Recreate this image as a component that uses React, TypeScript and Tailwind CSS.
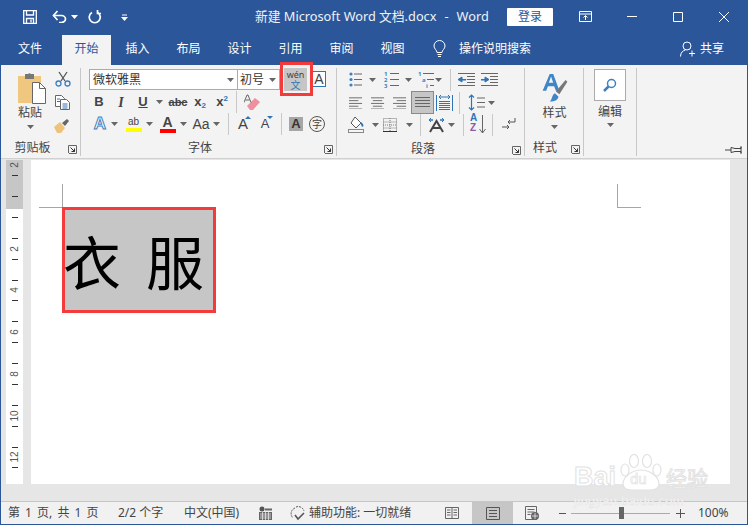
import type { ReactNode } from "react";

const Caret = ({ className = "" }: { className?: string }) => (
  <svg className={"shrink-0 " + className} width="7" height="4" viewBox="0 0 7 4">
    <path d="M0 0h7L3.5 4z" fill="#666" />
  </svg>
);

const Sep = ({ className = "" }: { className?: string }) => <div className={"w-px h-[22px] bg-[#c8c8c8] shrink-0 " + className} />;

const Launcher = ({ className = "" }: { className?: string }) => (
  <svg className={"absolute top-[4px] " + className} width="9" height="9" viewBox="0 0 9 9" fill="none" stroke="#666">
    <path d="M.5 8V.5H8.5V8.5H1" />
    <path d="M2.5 2.5l4 4M6.5 3.5v3h-3" stroke="#333" />
  </svg>
);

const Cell = ({ className, children }: { className: string; children: ReactNode }) => (
  <div className={"flex items-center justify-center shrink-0 h-full " + className}>{children}</div>
);

const Lines = ({ rows }: { rows: [number, number][] }) => (
  <svg width="15" height="13" viewBox="0 0 15 13" stroke="#666">
    {rows.map(([a, b], i) => (
      <path key={i} d={`M${a} ${1.5 + i * 3}H${b}`} />
    ))}
  </svg>
);

const Bullets = () => (
  <svg width="13" height="15" viewBox="0 0 13 15">
    <g fill="#3f7fbf">
      <circle cx="2" cy="2" r="1.6" />
      <circle cx="2" cy="7.5" r="1.6" />
      <circle cx="2" cy="13" r="1.6" />
    </g>
    <path d="M5 2h8M5 7.5h8M5 13h8" stroke="#666" />
  </svg>
);

const Numbered = () => (
  <div className="relative w-[15px] h-[17px]">
    <div className="flex flex-col text-[6px] leading-[6px] font-bold text-[#3f7fbf]">
      <span>1</span>
      <span>2</span>
      <span>3</span>
    </div>
    <svg className="absolute left-[6px] top-0" width="9" height="17" viewBox="0 0 9 17">
      <path d="M0 2.5h9M0 8.5h9M0 14.5h9" stroke="#666" />
    </svg>
  </div>
);

const Multi = () => (
  <div className="relative w-[15px] h-[17px]">
    <span className="absolute left-0 top-0 text-[6px] leading-[6px] font-bold text-[#3f7fbf]">1</span>
    <span className="absolute left-[4px] top-[6px] text-[6px] leading-[6px] font-bold text-[#3f7fbf]">a</span>
    <span className="absolute left-[8px] top-[12px] text-[6px] leading-[6px] font-bold text-[#3f7fbf]">i</span>
    <svg className="absolute left-0 top-0" width="17" height="17" viewBox="0 0 17 17">
      <path d="M5 2.5h11M9 8.5h7M12 14.5h4" stroke="#666" />
    </svg>
  </div>
);

const Indent = ({ flip }: { flip?: boolean }) => (
  <svg width="17" height="13" viewBox="0 0 17 13">
    <path d="M0 .5h17M9 3.5h8M9 6.5h8M9 9.5h8M0 12.5h17" stroke="#666" />
    {flip ? <path d="M0 6.5h4V4l4 2.5L4 9V7H0z" fill="#2e75b6" stroke="#2e75b6" /> : <path d="M8 6.5H4V4L0 6.5 4 9V7h4z" fill="#2e75b6" stroke="#2e75b6" />}
  </svg>
);

const Paste = () => (
  <svg width="30" height="33" viewBox="0 0 30 33">
    <path d="M1 5h23v27H1z" fill="#efc77f" />
    <path d="M8 3h3a2 2 0 0 1 3 0h3v5H8z" fill="#777" />
    <path d="M15.500 11.500h7l6 6v15h-13z" fill="#fff" stroke="#666" />
    <path d="M22.500 11.500v6h6" fill="none" stroke="#666" />
  </svg>
);

const Scissors = () => (
  <svg width="16" height="16" viewBox="0 0 16 16" fill="none">
    <path d="M4 1l6 9M12 1L6 10" stroke="#555" strokeWidth="1.300" />
    <circle cx="3.500" cy="12.500" r="2.500" stroke="#3f7fbf" strokeWidth="1.300" />
    <circle cx="12.500" cy="12.500" r="2.500" stroke="#3f7fbf" strokeWidth="1.300" />
  </svg>
);

const CopyIcon = () => (
  <svg width="16" height="15" viewBox="0 0 16 15" fill="#fff" stroke="#666">
    <path d="M.5.500h6l3 3v8h-9z" />
    <path d="M5.500 4.500h6l3 3v7h-9z" />
    <path d="M2 4h3M2 6.500h3M7.500 9h5M7.500 11h5M7.500 13h5" stroke="#2e75b6" />
  </svg>
);

const Painter = () => (
  <svg width="17" height="15" viewBox="0 0 17 15">
    <path d="M0 9l6-5 5 6-4 5H3z" fill="#efc27a" />
    <path d="M8 5l5-4 2 2-4 5z" fill="#666" />
  </svg>
);

const Eraser = () => (
  <svg width="17" height="17" viewBox="0 0 17 17">
    <path d="M3 12l8-8 5 4-7 8H6z" fill="#ef8fa0" />
    <path d="M0 8.500L3 1h1l3 7.500M1.500 6h4" fill="none" stroke="#666" />
  </svg>
);

const Shading = () => (
  <svg width="17" height="17" viewBox="0 0 17 17">
    <path d="M7 1l6 6-5 5-5-5z" fill="#fff" stroke="#555" />
    <path d="M12 6c1.500 0 3 1 3.500 4l-1.500 1z" fill="#2e75b6" />
    <rect x=".5" y="13.500" width="15" height="3" fill="#f5f5f5" stroke="#888" />
  </svg>
);

const Borders = () => (
  <svg width="14" height="14" viewBox="0 0 14 14" fill="none" stroke="#777" strokeDasharray="1 1">
    <path d="M.5.500h13v13H.500zM7 0v14M0 7h14M.5 4h13M.5 10h13" />
    <path d="M0 13.500h14" stroke="#333" strokeDasharray="none" />
  </svg>
);

const Asian = () => (
  <svg width="17" height="16" viewBox="0 0 17 16">
    <path d="M1 3h4M16 3h-4" stroke="#2e75b6" strokeWidth="1.500" />
    <path d="M3 1L1 3l2 2M14 1l2 2-2 2" fill="none" stroke="#2e75b6" />
    <path d="M2 15L8.500 4 15 15M5 11h7" fill="none" stroke="#444" strokeWidth="2" />
  </svg>
);

const Sort = () => (
  <div className="relative w-[15px] h-[21px]">
    <span className="absolute left-0 top-[-1px] text-[10px] leading-[10px] font-['Liberation_Sans'] font-bold text-[#2e75b6]">A</span>
    <span className="absolute left-0 top-[9px] text-[10px] leading-[10px] font-['Liberation_Sans'] font-bold text-[#8a5aa8]">Z</span>
    <svg className="absolute left-[9px] top-0" width="7" height="20" viewBox="0 0 7 20" fill="none" stroke="#666">
      <path d="M3.500 1v18M.5 15l3 4 3-4" />
    </svg>
  </div>
);

const Marks = () => (
  <svg width="15" height="15" viewBox="0 0 15 15" fill="none" stroke="#555">
    <path d="M14 1v4H7M9 3L7 5l2 2" />
    <path d="M1 10h7M6 8l2 2-2 2" />
  </svg>
);

const Distributed = () => (
  <svg width="17" height="16" viewBox="0 0 17 16">
    <path d="M.5 0v16M16.500 0v16M3 2h11M5 0L3 2l2 2M12 0l2 2-2 2" fill="none" stroke="#2e75b6" />
    <path d="M3 6.500h11M3 8.500h11M3 10.500h11M3 12.500h11M3 14.500h11" stroke="#666" />
  </svg>
);

const Spacing = () => (
  <svg width="17" height="17" viewBox="0 0 17 17">
    <path d="M3.500 1v15M1 3.500L3.500 1 6 3.500M1 13.500L3.500 16 6 13.500" fill="none" stroke="#2e75b6" strokeWidth="1.200" />
    <path d="M9 4h8M9 8.500h8M9 13h8" stroke="#666" />
  </svg>
);

const Styles = () => (
  <svg width="30" height="30" viewBox="0 0 30 34">
    <path d="M1 20L9 1h4l7 19h-4l-2-5H7l-2 5zM8 11h5l-2.500-7z" fill="#3f86c8" />
    <path d="M29 10l-9 14-4-3 11-13z" fill="#777" />
    <path d="M15 23l4 4c-1 4-5 6-10 5 3-1 2-7 6-9z" fill="#3f86c8" />
  </svg>
);

const SaveIcon = () => (
  <svg width="14" height="14" viewBox="0 0 14 14" fill="none" stroke="#fff" strokeWidth="1.300">
    <path d="M.7.700h12.600v12.600H.7z" />
    <path d="M3.500 1v4h7V1M3.500 13V8.500h7V13" />
    <path d="M8 9.500v3" />
  </svg>
);

const UndoIcon = () => (
  <svg width="16" height="13" viewBox="0 0 16 13" fill="none" stroke="#fff" strokeWidth="1.700">
    <path d="M1.500 5.500h8a4 3.500 0 0 1 0 7H7" />
    <path d="M5.500 1L1.500 5.500 5.500 10" />
  </svg>
);

const RedoIcon = () => (
  <svg width="14" height="14" viewBox="0 0 14 14" fill="none" stroke="#fff" strokeWidth="1.700">
    <path d="M4 2.500a5.500 5.500 0 1 0 5.500 0" />
    <path d="M9.500 0v3.500H13" />
  </svg>
);

const BulbIcon = () => (
  <svg width="13" height="18" viewBox="0 0 13 18" fill="none" stroke="#fff">
    <path d="M4 12.500C4 10 1 9 1 6a5.500 5.500 0 0 1 11 0c0 3-3 4-3 6.500z" />
    <path d="M4.500 14.500h4M5 16.500h3" />
  </svg>
);

const UserIcon = () => (
  <svg width="16" height="16" viewBox="0 0 16 16" fill="none" stroke="#fff">
    <circle cx="7" cy="5" r="4" />
    <path d="M.5 15.500c0-4 2.500-6 5-6.500M12 9.500v6M9 12.500h6" />
  </svg>
);

const Book = () => (
  <svg width="14" height="14" viewBox="0 0 14 14" fill="none" stroke="#666">
    <path d="M.5 1.500h13v11H.500zM7 1.500v11M2 4h3.500M2 6.500h3.500M2 9h3.500M8.500 4H12M8.500 6.500H12M8.500 9H12" />
  </svg>
);

const PageView = () => (
  <svg width="14" height="13" viewBox="0 0 14 13" fill="none" stroke="#555">
    <path d="M.5.500h13v12H.500zM3 3.500h8M3 6.500h8M3 9.500h8" />
  </svg>
);

const WebView = () => (
  <svg width="14" height="14" viewBox="0 0 14 14">
    <path d="M.5.500h11v13H.500zM2.500 3.500h7M2.500 6h7M2.500 8.500h3" fill="none" stroke="#666" />
    <circle cx="10" cy="10" r="4" fill="#666" />
    <path d="M7 10h6M10 7v6" stroke="#fff" strokeWidth=".7" />
  </svg>
);

const MacroIcon = () => (
  <svg width="13" height="14" viewBox="0 0 13 14">
    <circle cx="3" cy="3" r="2.500" fill="#555" />
    <path d="M6 2.500h7v2H6zM0 6h13v8H0z" fill="#666" />
    <path d="M1 8h11M1 10h11M1 12h11M3.500 6v8M6.500 6v8M9.500 6v8" stroke="#f1f1f1" strokeWidth=".7" />
  </svg>
);

const AccessIcon = () => (
  <svg width="16" height="15" viewBox="0 0 16 15" fill="none" stroke="#555">
    <path d="M5 2a6 6 0 0 0 -2 10" strokeDasharray="2 1" />
    <path d="M6 1a6 6 0 0 1 8 4" strokeDasharray="2 1" />
    <path d="M5 9l3 4 6-6" strokeWidth="1.600" />
  </svg>
);

const PawIcon = () => (
  <svg width="44" height="37" viewBox="0 0 44 37" fill="#fff" stroke="#e2e2e2" strokeWidth="1.200">
    <ellipse cx="6" cy="16" rx="4" ry="6" />
    <ellipse cx="15" cy="7" rx="4.500" ry="6.500" />
    <ellipse cx="28" cy="7" rx="4.500" ry="6.500" />
    <ellipse cx="38" cy="16" rx="4" ry="6" />
    <path d="M4 30c0-8 10-14 18-14s18 6 18 14c0 4-4 6-9 6H13c-5 0-9-2-9-6z" />
  </svg>
);

const rulerMarks = ["2", "-", "", "-", "", "-", "", "-", "2", "-", "", "-", "4", "-", "", "-", "6", "-", "", "-", "8", "-", "", "-", "10", "-", "", "-", "12", "-", ""];

const tabs = ["插入", "布局", "设计", "引用", "审阅", "视图"];

export default function App() {
  return (
    <div className="relative w-[748px] h-[525px] overflow-hidden flex flex-col bg-[#2b579a] font-['Noto_Sans','Noto_Sans_CJK_SC',sans-serif] text-[12px] text-[#444]">
      {/* title bar */}
      <div className="h-[34px] flex items-center text-white shrink-0 pb-[1px]">
        <div className="ml-[23px]"><SaveIcon /></div>
        <div className="ml-[15px]"><UndoIcon /></div>
        <svg className="ml-[3px]" width="7" height="4" viewBox="0 0 7 4"><path d="M0 0h7L3.500 4z" fill="#fff" /></svg>
        <div className="ml-[10px]"><RedoIcon /></div>
        <svg className="ml-[19px] mt-[1px]" width="7" height="7" viewBox="0 0 7 7"><path d="M1 1h5" stroke="#fff" /><path d="M0 3h7L3.500 7z" fill="#fff" /></svg>
        <span className="ml-[127px] w-[252px] text-[12.75px] whitespace-pre text-[#eef2f8]">
          新建 Microsoft Word 文档.docx<span className="mx-[8px]">-</span>Word
        </span>
        <div className="w-[46px] h-[18px] bg-white rounded-[1px] text-[#2b579a] text-[12px] leading-[18px] text-center">登录</div>
        <svg className="ml-[26px]" width="13" height="11" viewBox="0 0 13 11" fill="none" stroke="#fff"><path d="M.5.500h12v10H.500zM.5 3h12M6.500 9V5M4.500 6.500l2-2 2 2" /></svg>
        <svg className="ml-[35px]" width="10" height="1" viewBox="0 0 10 1"><path d="M0 .5h10" stroke="#fff" /></svg>
        <svg className="ml-[36px]" width="10" height="10" viewBox="0 0 10 10" fill="none" stroke="#fff"><path d="M.5.500h9v9h-9z" /></svg>
        <svg className="ml-[36px]" width="10" height="10" viewBox="0 0 10 10" fill="none" stroke="#fff"><path d="M0 0l10 10M10 0L0 10" /></svg>
      </div>

      {/* tabs */}
      <div className="h-[31px] flex text-white shrink-0">
        <div className="ml-[6px] w-[48px] flex items-center justify-center pb-[2px]">文件</div>
        <div className="ml-[8px] w-[49px] mt-[1px] bg-[#f3f3f3] text-[#2b579a] flex items-center justify-center pb-[2px]">开始</div>
        <div className="flex ml-[1px]">
          {tabs.map((t) => (
            <div key={t} className="w-[51px] flex items-center justify-center pb-[2px]">{t}</div>
          ))}
        </div>
        <div className="ml-[15px] flex items-center gap-[13px] pb-[2px]">
          <BulbIcon />
          <span>操作说明搜索</span>
        </div>
        <div className="ml-[149px] flex items-center gap-[4px] pb-[1px]">
          <UserIcon />
          <span>共享</span>
        </div>
      </div>

      {/* ribbon */}
      <div className="relative h-[94px] bg-[#f3f3f3] border-b border-[#d0d0d0] flex pt-[3px] mx-[1px] shrink-0">
        {/* clipboard */}
        <div className="relative w-[80px] h-[88px] border-r border-[#c8c8c8] flex flex-col">
          <div className="h-[67px] flex">
            <div className="w-[58px] shrink-0 flex flex-col items-center">
              <div className="mt-[3px] ml-[3px] h-[33px]"><Paste /></div>
              <span className="leading-[18px]">粘贴</span>
              <Caret className="mt-[3px]" />
            </div>
            <div className="flex flex-col items-center gap-[8px] pt-[3px] ml-[-5px]">
              <Scissors />
              <CopyIcon />
              <Painter />
            </div>
          </div>
          <div className="relative h-[21px] flex items-center justify-center pt-[5px] pr-[16px]">
            <span>剪贴板</span>
            <Launcher className="right-[3px] top-[10px]" />
          </div>
        </div>

        {/* font */}
        <div className="relative w-[256px] h-[88px] border-r border-[#c8c8c8] flex flex-col">
          <div className="h-[23px] flex items-start pl-[8px]">
            <div className="mt-[1px] w-[149px] h-[21px] bg-white border border-[#ababab] flex items-center justify-between pl-[3px] pr-[3px]">
              <span className="text-[#333]">微软雅黑</span>
              <Caret />
            </div>
            <div className="mt-[1px] ml-[-1px] w-[43px] h-[21px] bg-white border border-[#ababab] flex items-center justify-between pl-[2px] pr-[3px]">
              <span className="text-[#333]">初号</span>
              <Caret />
            </div>
            <div className="ml-[4px] w-[23px] h-[23px] bg-[#c6c6c6] flex flex-col items-center justify-center">
              <span className="text-[9px] text-[#444] leading-[10px]">wén</span>
              <span className="text-[10px] text-[#2e75b6] leading-[10px]">文</span>
            </div>
            <div className="ml-[5px] mt-[3px] w-[14px] h-[16px] border border-[#2e75b6] bg-white flex items-center justify-center text-[14px] leading-none font-['Liberation_Sans'] text-[#444]">A</div>
          </div>
          <div className="h-[22px] flex items-center pl-[7px] font-['Liberation_Sans'] text-[#444]">
            <Cell className="w-[22px] font-bold text-[13px]">B</Cell>
            <Cell className="w-[22px] italic font-['Liberation_Serif'] text-[14px] font-bold">I</Cell>
            <Cell className="w-[22px] font-bold text-[13px] underline">U</Cell>
            <Cell className="w-[11px]"><Caret /></Cell>
            <Cell className="ml-[2px] w-[22px] font-bold text-[11px] line-through">abc</Cell>
            <Cell className="w-[22px] font-bold text-[13px]">x<span className="text-[8px] text-[#2e75b6] mt-[7px]">2</span></Cell>
            <Cell className="w-[22px] font-bold text-[13px]">x<span className="text-[8px] text-[#2e75b6] mb-[7px]">2</span></Cell>
            <Sep className="ml-[3px]" />
            <Cell className="ml-[4px] w-[22px]"><Eraser /></Cell>
          </div>
          <div className="h-[22px] flex items-center pl-[8px] font-['Liberation_Sans']">
            <Cell className="w-[22px] text-[17px] font-bold text-white [-webkit-text-stroke:1px_#3f7fbf]">A</Cell>
            <Cell className="w-[7px]"><Caret /></Cell>
            <Cell className="ml-[4px] w-[23px] flex-col">
              <span className="text-[10px] leading-[10px] text-[#444]">ab</span>
              <span className="w-[16px] h-[4px] bg-[#ffff00] mt-[1px]" />
            </Cell>
            <Cell className="w-[8px]"><Caret /></Cell>
            <Cell className="ml-[3px] w-[23px] flex-col">
              <span className="text-[14px] leading-[12px] font-bold text-[#444]">A</span>
              <span className="w-[16px] h-[4px] bg-[#ff0000] mt-[1px]" />
            </Cell>
            <Cell className="w-[8px]"><Caret /></Cell>
            <Cell className="ml-[3px] w-[22px] text-[14px]">Aa</Cell>
            <Cell className="w-[8px]"><Caret /></Cell>
            <Sep className="ml-[8px]" />
            <Cell className="ml-[3px] w-[22px] text-[15px] relative">A<span className="absolute right-[3px] top-[3px] border-x-[3px] border-b-[3px] border-x-transparent border-b-[#2e75b6]" /></Cell>
            <Cell className="w-[22px] text-[13px] relative">A<span className="absolute right-[3px] top-[3px] border-x-[3px] border-t-[3px] border-x-transparent border-t-[#2e75b6]" /></Cell>
            <Sep className="ml-[5px]" />
            <Cell className="ml-[3px] w-[22px]"><span className="w-[14px] h-[14px] bg-[#a6a6a6] flex items-center justify-center font-bold text-[13px] text-[#333]">A</span></Cell>
            <Cell className="w-[20px]"><span className="w-[16px] h-[16px] rounded-full border border-[#555] flex items-center justify-center text-[10px] leading-none font-['Noto_Sans_CJK_SC']">字</span></Cell>
          </div>
          <div className="relative h-[21px] flex items-center justify-center pt-[5px] pr-[17px]">
            <span>字体</span>
            <Launcher className="right-[3px] top-[10px]" />
          </div>
          {/* red highlight around the phonetic guide button */}
          <div className="absolute left-[199px] top-[-6px] w-[33px] h-[34px] border-[3px] border-[#f33b3b]" />
        </div>

        {/* paragraph */}
        <div className="relative w-[188px] h-[88px] border-r border-[#c8c8c8] flex flex-col">
          <div className="h-[23px] flex items-center pl-[12px]">
            <Bullets />
            <Caret className="ml-[7px]" />
            <div className="ml-[8px]"><Numbered /></div>
            <Caret className="ml-[6px]" />
            <div className="ml-[6px]"><Multi /></div>
            <Caret className="ml-[2px]" />
            <Sep className="ml-[8px]" />
            <div className="ml-[7px]"><Indent /></div>
            <div className="ml-[6px]"><Indent flip /></div>
          </div>
          <div className="h-[23px] flex items-center pl-[12px]">
            <Cell className="w-[14px]"><Lines rows={[[0, 14], [0, 10], [0, 14], [0, 10], [0, 14]]} /></Cell>
            <Cell className="ml-[8px] w-[14px]"><Lines rows={[[0, 14], [2, 12], [0, 14], [2, 12], [0, 14]]} /></Cell>
            <Cell className="ml-[8px] w-[14px]"><Lines rows={[[0, 14], [4, 14], [0, 14], [4, 14], [0, 14]]} /></Cell>
            <div className="ml-[4px] w-[23px] h-[23px] bg-[#c6c6c6] border border-[#8a8a8a] flex items-center justify-center">
              <Lines rows={[[0, 15], [0, 15], [0, 15], [0, 15], [0, 15]]} />
            </div>
            <div className="ml-[2px]"><Distributed /></div>
            <Sep className="ml-[6px]" />
            <div className="ml-[8px]"><Spacing /></div>
            <Caret className="ml-[3px]" />
          </div>
          <div className="h-[22px] flex items-center pl-[11px] pb-[1px]">
            <Shading />
            <Caret className="ml-[7px]" />
            <div className="ml-[4px]"><Borders /></div>
            <Caret className="ml-[9px]" />
            <Sep className="ml-[7px]" />
            <div className="ml-[7px]"><Asian /></div>
            <Caret className="ml-[3px]" />
            <Sep className="ml-[8px]" />
            <div className="ml-[6px]"><Sort /></div>
            <Sep className="ml-[7px]" />
            <div className="ml-[8px]"><Marks /></div>
          </div>
          <div className="relative h-[20px] flex items-center justify-center pt-[5px] pr-[15px]">
            <span>段落</span>
            <Launcher className="right-[3px] top-[10px]" />
          </div>
        </div>

        {/* styles */}
        <div className="relative w-[59px] h-[88px] border-r border-[#c8c8c8] flex flex-col">
          <div className="h-[67px] flex flex-col items-center pl-[1px]">
            <div className="mt-[5px] h-[30px]"><Styles /></div>
            <span className="leading-[18px] mt-[1px]">样式</span>
            <Caret className="mt-[3px]" />
          </div>
          <div className="relative h-[21px] flex items-center pl-[8px] pt-[5px]">
            <span>样式</span>
            <Launcher className="right-[3px] top-[10px]" />
          </div>
        </div>

        {/* editing */}
        <div className="w-[53px] h-[88px] border-r border-[#c8c8c8] flex flex-col items-center">
          <div className="mt-[1px] w-[32px] h-[32px] bg-white border border-[#ababab] flex items-center justify-center">
            <svg width="14" height="14" viewBox="0 0 14 14" fill="none" stroke="#3f7fbf" strokeWidth="1.500">
              <circle cx="8.500" cy="5.500" r="4" />
              <path d="M5.500 8.500L1 13" strokeWidth="2.500" />
            </svg>
          </div>
          <span className="leading-[18px] mt-[2px]">编辑</span>
          <Caret className="mt-[2px]" />
        </div>

        <div className="flex-1 flex justify-end items-end pr-[5px] pb-[4px]">
          <svg width="17" height="8" viewBox="0 0 17 8" fill="none" stroke="#444">
            <path d="M0 4h6M6 1.500l4 1h6v-2V7.500v-2h-6l-4 1z" />
          </svg>
        </div>
      </div>

      {/* document area */}
      <div className="flex-1 mx-[1px] bg-[#e6e6e6] flex pt-[1px] pb-[17px] pl-[5px] pr-[17px] min-h-0">
        <div className="w-[17px] overflow-hidden bg-[linear-gradient(#c6c6c6_49px,#fff_49px)] flex flex-col font-['Liberation_Sans'] text-[10px] text-[#555]">
          {rulerMarks.map((m, i) => (
            <div key={i} className="h-[10.45px] shrink-0 flex items-center justify-center">
              {m === "-" ? <span className="w-[6px] h-px bg-[#333]" /> : <span className="-rotate-90 leading-none">{m}</span>}
            </div>
          ))}
        </div>
        <div className="relative ml-[8px] flex-1 bg-white pl-[31px] pt-[47px]">
          <div className="absolute left-[8px] top-[24px] w-[24px] h-[24px] border-r border-b border-[#a6a6a6]" />
          <div className="absolute left-[586px] top-[24px] w-[24px] h-[24px] border-l border-b border-[#a6a6a6]" />
          <div className="relative w-[154px] h-[106px] bg-[#c6c6c6] border-[3px] border-[#f33b3b] flex items-center pb-[1px] font-['Noto_Sans_CJK_SC'] text-[58px] leading-none text-black">
            <span className="w-[83px] ml-[-2px]">衣</span>
            <span>服</span>
          </div>
        </div>
      </div>

      {/* status bar */}
      <div className="h-[23px] mx-[1px] mb-[1px] bg-[#f1f1f1] border-t border-[#c6c6c6] flex items-center text-[#444] shrink-0 whitespace-nowrap">
        <span className="ml-[7px] w-[110px] [word-spacing:2px]">第 1 页, 共 1 页</span>
        <span className="w-[66px]">2/2 个字</span>
        <span className="w-[75px]">中文(中国)</span>
        <MacroIcon />
        <div className="ml-[18px]"><AccessIcon /></div>
        <span className="ml-[3px] w-[136px]">辅助功能: 一切就绪</span>
        <Book />
        <div className="ml-[13px] w-[41px] h-full bg-[#c6c6c6] flex items-center justify-center"><PageView /></div>
        <div className="ml-[12px]"><WebView /></div>
        <svg className="ml-[20px]" width="7" height="1" viewBox="0 0 7 1"><path d="M0 .5h7" stroke="#555" /></svg>
        <div className="relative ml-[5px] w-[99px] h-px bg-[#aaa]">
          <span className="absolute left-[48px] top-[-6px] w-[5px] h-[12px] bg-[#666]" />
        </div>
        <svg className="ml-[6px]" width="9" height="9" viewBox="0 0 9 9"><path d="M0 4.500h9M4.500 0v9" stroke="#555" /></svg>
        <span className="ml-[13px]">100%</span>
      </div>

      {/* watermark */}
      <div className="absolute left-[574px] top-[445px] w-[134px] h-[62px] font-['Liberation_Sans'] text-white [-webkit-text-stroke:1px_#e2e2e2] whitespace-nowrap">
        <div className="flex items-end h-[46px]">
          <span className="text-[27px] leading-[28px] font-bold">Bai</span>
          <div className="relative ml-[3px] shrink-0">
            <PawIcon />
            <span className="absolute left-[11px] top-[17px] text-[15px] leading-[16px] [-webkit-text-stroke:.7px_#e2e2e2]">du</span>
          </div>
          <span className="ml-[3px] text-[21px] leading-[28px] font-['Noto_Sans_CJK_SC']">经验</span>
        </div>
        <div className="mt-[3px] text-[13px] leading-[13px] tracking-[.3px] [-webkit-text-stroke:.5px_#e2e2e2]">jingyan.baidu.com</div>
      </div>
    </div>
  );
}
